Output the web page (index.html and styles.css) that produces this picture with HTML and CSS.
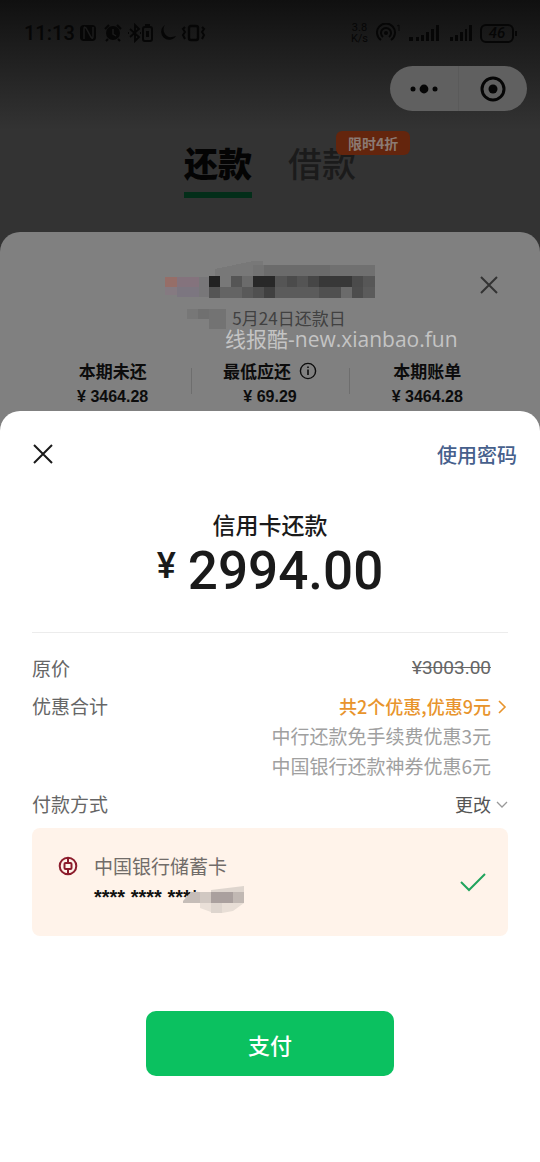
FILE: index.html
```html
<!DOCTYPE html>
<html lang="zh-CN">
<head>
<meta charset="utf-8">
<meta name="viewport" content="width=device-width, initial-scale=1">
<title>信用卡还款</title>
<link rel="stylesheet" href="styles.css">
</head>
<body>
<div class="backdrop">
  <div class="status">
    <div class="status-side">
      <span class="clock">11:13</span>
      <svg class="status-left" width="128" height="20" viewBox="0 0 128 20" fill="none" stroke="currentColor" stroke-width="2">
        <rect x="1" y="2" width="16" height="16" rx="4" fill="currentColor" stroke="none"/>
        <path d="M5 16V6q0-3 2-1l5 9q2 3 2-1V4" stroke="#1b1b1b" stroke-width="1.5"/>
        <circle cx="34" cy="10" r="7" fill="currentColor" stroke="none"/>
        <path d="M26 6l4-4M38 2l4 4M29 16l-2 2M39 16l2 2"/>
        <path d="M34 6v5l3 2" stroke="#1b1b1b" stroke-width="1.5"/>
        <path d="M51 6l9 8-4 4V2l4 4-9 8" stroke-width="1.8"/>
        <path d="M49 10h1M61 10h1"/>
        <rect x="64" y="4" width="9" height="14" rx="2"/>
        <path d="M66 2h5"/>
        <rect x="67" y="8" width="3" height="6" fill="currentColor" stroke="none"/>
        <path d="M86 2a8 8 0 1 0 11 11q-8 3-11-2t0-9z" fill="currentColor" stroke="none"/>
        <rect x="110" y="3" width="9" height="14" rx="2" stroke-width="2.4"/>
        <path d="M106 4l-2 2 2 3-2 3 2 4M123 4l2 2-2 3 2 3-2 4"/>
      </svg>
    </div>
    <div class="status-side">
      <span class="speed">3.8<br>K/s</span>
      <svg width="28" height="20" viewBox="0 0 28 20" fill="none" stroke="currentColor" stroke-width="2">
        <path d="M5 17a9 9 0 1 1 10 0M7 14a5 5 0 1 1 6 0"/>
        <circle cx="10" cy="10" r="2" fill="currentColor" stroke="none"/>
        <path d="M21 3l2-1v6" stroke-width="1"/>
      </svg>
      <svg width="64" height="20" viewBox="0 0 64 20" fill="currentColor">
        <path d="M1 14h4v4H1zM8 14h3v4H8zM13 12h3v6h-3zM18 9h3v9h-3zM23 6h3v12h-3zM28 2h3v16h-3zM42 14h3v4h-3zM47 12h3v6h-3zM52 9h3v9h-3zM57 6h2v12h-2zM61 2h3v16h-3z"/>
      </svg>
      <span class="battery">46</span>
    </div>
  </div>

  <div class="capsule-row">
    <div class="capsule">
      <button class="capsule-btn" aria-label="更多">
        <svg width="28" height="12" viewBox="0 0 28 12"><circle cx="3" cy="6" r="2.5"/><circle cx="14" cy="6" r="4.4"/><circle cx="25" cy="6" r="2.5"/></svg>
      </button>
      <button class="capsule-btn capsule-close" aria-label="关闭小程序">
        <svg width="26" height="26" viewBox="0 0 26 26"><circle cx="13" cy="13" r="11" fill="none" stroke="currentColor" stroke-width="3"/><circle cx="13" cy="13" r="4.5"/></svg>
      </button>
    </div>
  </div>

  <nav class="tabs">
    <button class="tab tab-active">还款</button>
    <button class="tab">借款<span class="badge">限时4折</span></button>
  </nav>

  <section class="bill">
    <svg class="mosaic" width="290" height="70" viewBox="0 0 290 70" shape-rendering="crispEdges" aria-hidden="true">
      <path d="M75 8l38-8h10v35H75z" fill="#787878"/>
      <path d="M25 16h12v10H25z" fill="#966e68"/><path d="M37 16h22v10H37z" fill="#84737d"/>
      <path d="M25 26h12v8H25z" fill="#857a81"/><path d="M37 26h22v10H37z" fill="#7c7680"/>
      <path d="M59 16h10v20H59z" fill="#787779"/>
      <path d="M113 4h11v11h-11z" fill="#737373"/><path d="M124 4h66v11h-66z" fill="#6b6b6b"/><path d="M190 4h45v11h-45z" fill="#707070"/>
      <path d="M69 15h11v11H69z" fill="#222"/><path d="M91 15h11v11H91z" fill="#555"/><path d="M102 15h11v11h-11z" fill="#6b6b6b"/>
      <path d="M113 15h22v11h-22z" fill="#282828"/><path d="M135 15h12v11h-12z" fill="#555"/><path d="M147 15h10v11h-10z" fill="#4b4b4b"/><path d="M157 15h11v11h-11z" fill="#545454"/>
      <path d="M168 15h11v11h-11z" fill="#464646"/><path d="M179 15h33v11h-33z" fill="#383838"/><path d="M212 15h11v11h-11z" fill="#4b4b4b"/><path d="M223 15h12v11h-12z" fill="#575757"/>
      <path d="M69 26h11v11H69z" fill="#555"/><path d="M80 26h22v11H80z" fill="#646464"/><path d="M102 26h11v11h-11z" fill="#595959"/><path d="M113 26h11v11h-11z" fill="#505050"/><path d="M124 26h11v11h-11z" fill="#404040"/>
      <path d="M135 26h44v11h-44z" fill="#5b5b5b"/><path d="M179 26h22v11h-22z" fill="#505050"/><path d="M201 26h11v11h-11z" fill="#6b6b6b"/><path d="M212 26h11v11h-11z" fill="#4d4d4d"/><path d="M223 26h12v11h-12z" fill="#5b5b5b"/>
      <path d="M47 48h11v10H47z" fill="#777"/><path d="M58 48h11v10H58z" fill="#707070"/><path d="M69 48h17v20H69z" fill="#737373"/>
    </svg>
    <button class="bill-close" aria-label="关闭账单">
      <svg width="20" height="20" viewBox="0 0 20 20" fill="none" stroke="currentColor" stroke-width="2"><path d="M2 2l16 16M18 2L2 18"/></svg>
    </button>
    <p class="due">5月24日还款日</p>
    <p class="watermark">线报酷-new.xianbao.fun</p>
    <dl class="totals">
      <div class="total"><dt>本期未还</dt><dd>¥ 3464.28</dd></div>
      <div class="total"><dt>最低应还
        <svg class="info" width="18" height="18" viewBox="0 0 18 18"><circle cx="9" cy="9" r="7.6" fill="none" stroke="currentColor" stroke-width="1.4"/><path d="M8.2 4.5h1.6v1.6H8.2zM8.2 7.5h1.6V13H8.2z" fill="currentColor"/></svg></dt><dd>¥ 69.29</dd></div>
      <div class="total"><dt>本期账单</dt><dd>¥ 3464.28</dd></div>
    </dl>
  </section>
</div>

<main class="sheet">
  <header class="sheet-head">
    <button class="sheet-close" aria-label="关闭">
      <svg width="22" height="22" viewBox="0 0 22 22" fill="none" stroke="currentColor" stroke-width="2"><path d="M2 2l18 18M20 2L2 20"/></svg>
    </button>
    <a class="use-password" href="#">使用密码</a>
  </header>

  <h1 class="title">信用卡还款</h1>
  <p class="amount"><span class="currency">¥</span><span>2994.00</span></p>

  <div class="details">
    <div class="row"><span>原价</span><s class="value price">¥3003.00</s></div>
    <div class="row">
      <span>优惠合计</span>
      <div class="offers">
        <button class="value offer-total">共2个优惠,优惠9元
          <svg class="arrow" width="12" height="14" viewBox="0 0 12 14" fill="none" stroke="currentColor" stroke-width="1.6"><path d="M3 1l6 6-6 6"/></svg></button>
        <span class="value offer">中行还款免手续费优惠3元</span>
        <span class="value offer">中国银行还款神券优惠6元</span>
      </div>
    </div>
    <div class="row">
      <span>付款方式</span>
      <button class="value change">更改
        <svg class="arrow" width="12" height="14" viewBox="0 0 12 14" fill="none" stroke="#999" stroke-width="1.3"><path d="M1 4l5 5 5-5"/></svg></button>
    </div>
  </div>

  <div class="method">
    <svg class="bank-logo" width="20" height="20" viewBox="0 0 20 20" fill="none" stroke="#8c1c2c" stroke-width="2"><circle cx="10" cy="10" r="8.3"/><rect x="6.5" y="7" width="7" height="6" rx="1"/><path d="M10 2v5M10 13v5"/></svg>
    <div class="method-text">
      <span class="bank">中国银行储蓄卡</span>
      <span class="number">**** **** ****
        <svg class="number-mask" width="62" height="28" viewBox="0 0 62 28" aria-hidden="true"><path d="M1 15l8-9h9v11H1z" fill="#c6bdb8"/><path d="M18 6h11v11H18z" fill="#d1c8c2"/><path d="M29 6h22v11H29z" fill="#aaa09e"/><path d="M51 6h11v11H51z" fill="#c1b8b3"/><path d="M29 4l33-4v6H29z" fill="#ded5ce"/><path d="M18 17h11v9l-11-4z" fill="#eae0d8"/><path d="M29 17h11v10H29z" fill="#ded5ce"/><path d="M40 17h22l-11 8-11 2z" fill="#e8ded6"/></svg>
      </span>
    </div>
    <svg class="check" width="26" height="20" viewBox="0 0 26 20" fill="none" stroke="#20a35c" stroke-width="2"><path d="M1 10l8 8L25 2"/></svg>
  </div>

  <button class="pay">支付</button>
</main>
</body>
</html>
```
FILE: styles.css
```css
* { box-sizing: border-box; }

body {
  margin: 0;
  background: #fff;
  color: #1a1a1a;
  font-family: "Noto Sans CJK SC", sans-serif;
}

button {
  padding: 0;
  border: 0;
  background: none;
  color: inherit;
  font: inherit;
}

svg { display: block; fill: currentColor; }
svg[fill="none"] { fill: none; }
p, h1, dl, dd { margin: 0; }

.backdrop {
  background: linear-gradient(#101010, #333 130px);
}

/* status bar */
.status {
  display: flex;
  justify-content: space-between;
  height: 66px;
  padding: 0 26px 0 24px;
  color: #060606;
}
.status-side { display: flex; align-items: center; gap: 4px; }
.clock { font: 500 20px/24px Roboto, sans-serif; }
.speed { font: 11px/11px Roboto, sans-serif; text-align: center; margin-right: 4px; }
.battery {
  position: relative;
  width: 34px;
  margin-left: 4px;
  border: 2px solid;
  border-radius: 6px;
  font: italic 500 15px/15px Roboto, sans-serif;
  text-align: center;
}
.battery::after {
  content: "";
  position: absolute;
  top: 5px;
  right: -5px;
  width: 2px;
  height: 5px;
  background: currentColor;
}

.capsule-row { display: flex; justify-content: flex-end; padding-right: 13px; }
.capsule {
  display: flex;
  width: 137px;
  height: 45px;
  border-radius: 23px;
  background: #606060;
  color: #060606;
}
.capsule-btn { flex: 1; display: flex; align-items: center; justify-content: center; }
.capsule-close { border-left: 1px solid #5a5a5a; }

/* tabs */
.tabs {
  display: flex;
  justify-content: center;
  gap: 36px;
  padding: 28px 0 34px;
}
.tab {
  position: relative;
  border-bottom: 6px solid transparent;
  color: #1b1b1b;
  font-size: 34px;
  font-weight: 500;
  line-height: 48px;
  height: 59px;
  padding-bottom: 5px;
}
.tab-active { border-color: #032e19; color: #040404; font-weight: 900; }
.badge {
  position: absolute;
  top: -8px;
  left: 48px;
  padding: 0 12px;
  border-radius: 6px;
  background: #64250d;
  color: #8b7a73;
  font-size: 14px;
  font-weight: 700;
  line-height: 24px;
  white-space: nowrap;
}

/* bill card behind the sheet */
.bill {
  position: relative;
  padding: 76px 34px 21px;
  border-radius: 20px 20px 0 0;
  background: #808080;
}
.mosaic { position: absolute; top: 29px; left: 140px; }
.bill-close { position: absolute; top: 43px; right: 41px; color: #333; }
.due {
  padding-left: 38px;
  color: #414141;
  font-size: 17px;
  line-height: 20px;
  text-align: center;
}
.watermark {
  position: absolute;
  top: 94px;
  left: 225px;
  color: #c4c4c4;
  font: 21px/26px "Open Sans", "Noto Sans CJK SC", sans-serif;
  white-space: nowrap;
}
.totals {
  display: grid;
  grid-template-columns: repeat(3, 1fr);
  margin-top: 30px;
  color: #0c0c0c;
  font-weight: 700;
  text-align: center;
}
.total { position: relative; }
.total + .total::before {
  content: "";
  position: absolute;
  top: 10px;
  left: 0;
  height: 26px;
  border-left: 1px solid #6e6e6e;
}
.total dt {
  display: flex;
  align-items: center;
  justify-content: center;
  gap: 8px;
  font-size: 17px;
  line-height: 26px;
}
.total dd { font: 700 16px/26px "Liberation Sans", sans-serif; }

/* payment sheet */
.sheet {
  position: relative;
  margin-top: -20px;
  padding: 0 32px 86px;
  border-radius: 20px 20px 0 0;
  background: #fff;
}
.sheet-head {
  display: flex;
  align-items: center;
  justify-content: space-between;
  height: 86px;
  margin-right: -9px;
}
.use-password {
  color: #46608c;
  font-size: 20px;
  font-weight: 500;
  text-decoration: none;
}
.title {
  padding-top: 10px;
  font-size: 23px;
  font-weight: 500;
  line-height: 34px;
  text-align: center;
}
.amount {
  display: flex;
  justify-content: center;
  gap: 12px;
  padding-bottom: 31px;
  border-bottom: 1px solid #ececec;
  font: 500 53px/60px Roboto, sans-serif;
}
.currency { font-size: 36px; line-height: 50px; }

.details {
  display: flex;
  flex-direction: column;
  gap: 8px;
  padding: 20px 0 9px;
  color: #666;
  font-size: 19px;
  line-height: 30px;
}
.row { display: flex; justify-content: space-between; }
.offers { display: flex; flex-direction: column; align-items: flex-end; }
.value { position: relative; margin-right: 17px; }
.price { font-family: Roboto, sans-serif; }
.offer-total { color: #e8942c; font-size: 18px; font-weight: 500; }
.offer { color: #a0a0a0; }
.change { color: #555; font-size: 18px; }
.arrow { position: absolute; top: 9px; right: -17px; }

.method {
  display: flex;
  padding: 22px 22px 22px 26px;
  border-radius: 8px;
  background: #fff3ea;
}
.bank-logo { margin: 6px 16px 0 0; }
.method-text { display: flex; flex: 1; flex-direction: column; }
.bank { color: #716c69; font-size: 19px; line-height: 32px; }
.number {
  position: relative;
  align-self: flex-start;
  height: 32px;
  color: #111;
  font: 700 20px/30px "Liberation Sans", sans-serif;
}
.number-mask { position: absolute; top: 4px; left: 88px; }
.check { align-self: center; }

.pay {
  display: block;
  width: 248px;
  height: 65px;
  margin: 75px auto 0;
  border-radius: 10px;
  background: #0bc160;
  color: #fff;
  font-size: 22px;
  font-weight: 500;
}
```
